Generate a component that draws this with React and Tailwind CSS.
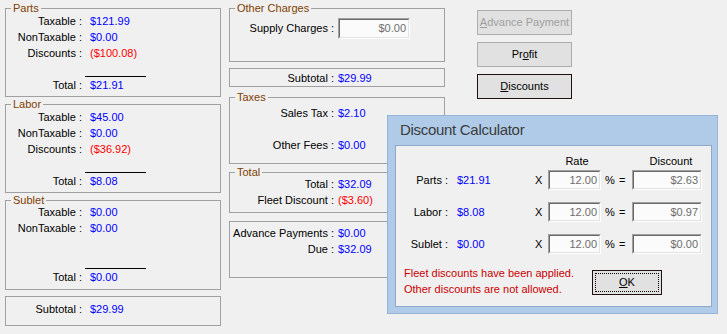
import React from "react";

function Group({ title, className = "", children }) {
  return (
    <div className={`relative border border-[#a0a0a0] ${className}`}>
      {title && (
        <span className="absolute left-[5px] -top-[8px] px-[2px] bg-[#f0f0f0] text-[#804000] leading-[14px]">
          {title}
        </span>
      )}
      {children}
    </div>
  );
}

function LRow({ label, value, red }) {
  return (
    <div className="flex h-[16px] items-center leading-[16px]">
      <span className="w-[76px] text-right">{label}</span>
      {value && (
        <span className={`ml-[8px] ${red ? "text-[#ff0000]" : "text-[#0000ff]"}`}>{value}</span>
      )}
    </div>
  );
}

function MRow({ label, value, red }) {
  return (
    <div className="flex h-[16px] items-center leading-[16px]">
      <span className="w-[104px] text-right whitespace-nowrap">{label}</span>
      <span className={`ml-[4px] ${red ? "text-[#ff0000]" : "text-[#0000ff]"}`}>{value}</span>
    </div>
  );
}

function SunkenInput({ value, className = "" }) {
  return (
    <div className={`border-t border-l border-[#a0a0a0] border-r border-b border-r-white border-b-white ${className}`}>
      <div className="h-full border-t border-l border-[#696969] border-r border-b border-r-[#e3e3e3] border-b-[#e3e3e3] bg-[#fbfbfb] flex items-center justify-end pr-[2px] text-[#6d6d6d]">
        {value}
      </div>
    </div>
  );
}

function Section({ title, rows, total }) {
  return (
    <Group title={title} className="h-[89px] pt-[4px]">
      {rows.map((r, i) => (
        <LRow key={i} label={r[0]} value={r[1]} red={r[2]} />
      ))}
      <div className="mt-[15px] ml-[79px] h-px w-[61px] bg-black" />
      <LRow label="Total :" value={total} />
    </Group>
  );
}

function Btn({ children, disabled, dark, className = "" }) {
  return (
    <div
      className={`w-[95px] h-[25px] flex items-center justify-center bg-[#e1e1e1] border ${
        dark ? "border-[#201010]" : "border-[#adadad]"
      } ${disabled ? "text-[#a0a0a0]" : "text-black"} ${className}`}
    >
      {children}
    </div>
  );
}

function CalcRow({ label, value, rate, disc, className = "" }) {
  return (
    <div className={`flex h-[20px] items-center ${className}`}>
      <span className="w-[52px] text-right">{label}</span>
      <span className="ml-[9px] w-[78px] text-[#0000ff]">{value}</span>
      <span className="w-[13px]">X</span>
      <SunkenInput value={rate} className="w-[53px] h-[20px]" />
      <span className="w-[17px] pl-[4px]">%</span>
      <span className="w-[14px] pl-[1px]">=</span>
      <SunkenInput value={disc} className="w-[70px] h-[20px]" />
    </div>
  );
}

export default function App() {
  return (
    <div className="relative w-[727px] h-[334px] overflow-hidden bg-[#f0f0f0] text-black text-[11px] font-['Liberation_Sans',Arial,sans-serif]">
      <div className="flex pl-[5px] pt-[8px]">
        {/* Left column */}
        <div className="w-[216px] flex flex-col">
          <Section
            title="Parts"
            rows={[
              ["Taxable :", "$121.99"],
              ["NonTaxable :", "$0.00"],
              ["Discounts :", "($100.08)", true],
            ]}
            total="$21.91"
          />
          <div className="mt-[7px]">
            <Section
              title="Labor"
              rows={[
                ["Taxable :", "$45.00"],
                ["NonTaxable :", "$0.00"],
                ["Discounts :", "($36.92)", true],
              ]}
              total="$8.08"
            />
          </div>
          <div className="mt-[7px]">
            <Group title="Sublet" className="h-[90px] pt-[3px]">
              <LRow label="Taxable :" value="$0.00" />
              <LRow label="NonTaxable :" value="$0.00" />
              <div className="h-[16px]" />
              <div className="mt-[16px] ml-[79px] h-px w-[61px] bg-black" />
              <LRow label="Total :" value="$0.00" />
            </Group>
          </div>
          <Group className="mt-[6px] h-[30px] pt-[4px]">
            <LRow label="Subtotal :" value="$29.99" />
          </Group>
        </div>

        {/* Middle column */}
        <div className="ml-[8px] w-[216px] flex flex-col">
          <Group title="Other Charges" className="h-[54px] pt-[9px]">
            <div className="flex items-center h-[21px]">
              <span className="w-[104px] text-right">Supply Charges :</span>
              <SunkenInput value="$0.00" className="ml-[4px] w-[72px] h-[21px]" />
            </div>
          </Group>
          <Group className="mt-[6px] h-[19px] flex items-center">
            <MRow label="Subtotal :" value="$29.99" />
          </Group>
          <Group title="Taxes" className="mt-[10px] h-[67px] pt-[7px]">
            <MRow label="Sales Tax :" value="$2.10" />
            <div className="mt-[16px]">
              <MRow label="Other Fees :" value="$0.00" />
            </div>
          </Group>
          <Group title="Total" className="mt-[8px] h-[41px] pt-[3px]">
            <MRow label="Total :" value="$32.09" />
            <MRow label="Fleet Discount :" value="($3.60)" red />
          </Group>
          <Group className="mt-[8px] h-[57px] pt-[3px]">
            <MRow label="Advance Payments :" value="$0.00" />
            <MRow label="Due :" value="$32.09" />
          </Group>
        </div>

        {/* Buttons */}
        <div className="ml-[32px] mt-[2px] flex flex-col gap-[7px]">
          <Btn disabled>
            <span>
              <span className="underline">A</span>dvance Payment
            </span>
          </Btn>
          <Btn>
            <span>
              Pr<span className="underline">o</span>fit
            </span>
          </Btn>
          <Btn dark>
            <span>
              <span className="underline">D</span>iscounts
            </span>
          </Btn>
        </div>
      </div>

      {/* Discount Calculator dialog */}
      <div className="absolute left-[387px] top-[115px] w-[331px] h-[199px] bg-[#afcbe7] border border-[#97b4d6]">
        <div className="h-[29px] pl-[12px] flex items-center text-[15px] text-[#3c3c3c] tracking-[-0.3px]">
          Discount Calculator
        </div>
        <div className="ml-[7px] w-[317px] h-[162px] bg-[#f0f0f0] border border-[#8ea9c9]">
          <div className="flex h-[16px] items-center mt-[7px]">
            <span className="ml-[168px] w-[26px] text-center">Rate</span>
            <span className="ml-[56px] w-[50px] text-center">Discount</span>
          </div>
          <CalcRow className="mt-[1px]" label="Parts :" value="$21.91" rate="12.00" disc="$2.63" />
          <CalcRow className="mt-[12px]" label="Labor :" value="$8.08" rate="12.00" disc="$0.97" />
          <CalcRow className="mt-[12px]" label="Sublet :" value="$0.00" rate="12.00" disc="$0.00" />
          <div className="flex mt-[11px]">
            <div className="ml-[8px] w-[188px] text-[#cc0000] leading-[16px]">
              <div>Fleet discounts have been applied.</div>
              <div>Other discounts are not allowed.</div>
            </div>
            <div className="mt-[5px] w-[70px] h-[25px] border border-[#201010] bg-[#e1e1e1] p-[2px]">
              <div className="w-full h-full border border-dotted border-black flex items-center justify-center">
                <span>
                  <span className="underline">O</span>K
                </span>
              </div>
            </div>
          </div>
        </div>
      </div>
    </div>
  );
}
